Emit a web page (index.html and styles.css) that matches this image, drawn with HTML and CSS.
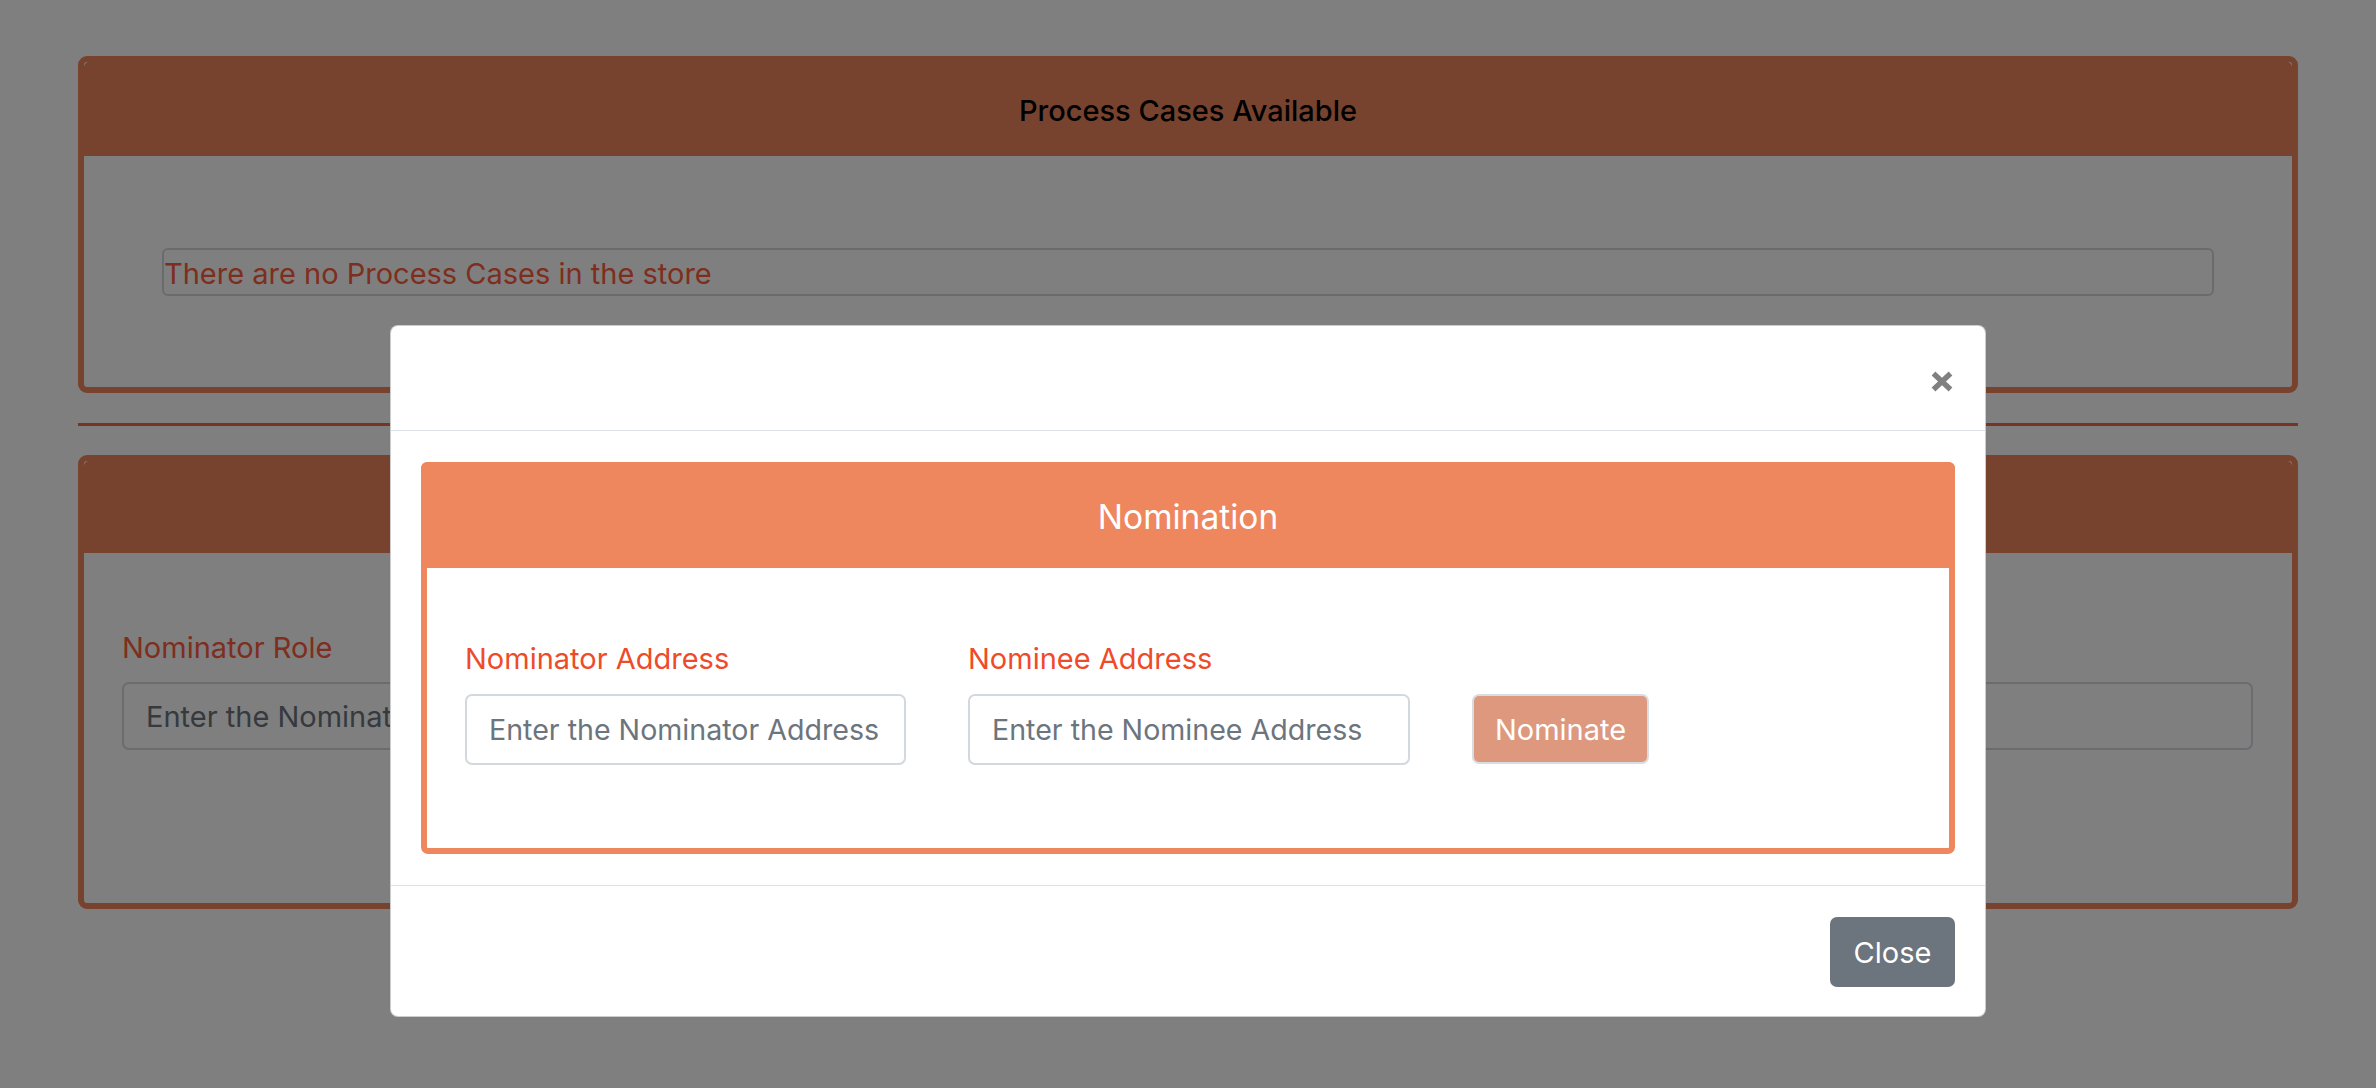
FILE: index.html
```html
<!DOCTYPE html>
<html lang="en">
<head>
<meta charset="utf-8">
<title>Process Cases</title>
<link rel="stylesheet" href="styles.css">
</head>
<body>
<main class="page">
  <section class="card bg-card cases-card">
    <header class="bg-card-header cases-header">
      <h5 class="cases-title">Process Cases Available</h5>
    </header>
    <div class="cases-body">
      <div class="empty-box">There are no Process Cases in the store</div>
    </div>
  </section>

  <hr class="divider">

  <section class="card bg-card role-card">
    <header class="bg-card-header role-header">
      <h5 class="cases-title">Nominator Role</h5>
    </header>
    <div class="role-body">
      <label class="bg-label">Nominator Role</label>
      <input class="bg-input" type="text" placeholder="Enter the Nominator Role">
    </div>
  </section>
</main>

<div class="backdrop"></div>

<div class="modal">
  <div class="modal-header">
    <button class="close" type="button" aria-label="Close">
      <svg width="24" height="23" viewBox="0 0 24 23"><path d="M3.5 3.5 L20.5 19.5 M20.5 3.5 L3.5 19.5" stroke="#808080" stroke-width="5.4" fill="none"/></svg>
    </button>
  </div>
  <div class="modal-body">
    <div class="nom-card">
      <div class="nom-header">Nomination</div>
      <div class="nom-body">
        <div class="field field-one">
          <label class="nom-label">Nominator Address</label>
          <input class="nom-input" type="text" placeholder="Enter the Nominator Address">
        </div>
        <div class="field field-two">
          <label class="nom-label">Nominee Address</label>
          <input class="nom-input" type="text" placeholder="Enter the Nominee Address">
        </div>
        <button class="btn-nominate" type="button">Nominate</button>
      </div>
    </div>
  </div>
  <div class="modal-footer">
    <button class="btn-close" type="button">Close</button>
  </div>
</div>
</body>
</html>
```

FILE: styles.css
```css
* { box-sizing: border-box; }

html, body {
  margin: 0;
  padding: 0;
  background: #ffffff;
  font-family: Inter, "Liberation Sans", Arial, sans-serif;
  color: #212529;
}

body {
  width: 2376px;
  height: 1088px;
  overflow: hidden;
  position: relative;
}

.page {
  padding: 56px 78px 0 78px;
}

/* background cards */
.bg-card {
  border: 6px solid #ee865e;
  border-radius: 9px;
}

.bg-card-header {
  background: #ee865e;
  border-radius: 5px 5px 0 0;
  display: flex;
  align-items: center;
  justify-content: center;
}

.cases-header {
  height: 94px;
  padding-top: 3px;
}

.cases-title {
  margin: 0;
  font-size: 29px;
  font-weight: 500;
  color: #000;
}

.role-header { height: 92px; }
.role-header .cases-title { visibility: hidden; }

.cases-body {
  padding: 92px 78px 91px 78px;
}

.empty-box {
  height: 48px;
  border: 2px solid #d4d6d9;
  border-radius: 6px;
  color: #fd5c3c;
  font-size: 29px;
  line-height: 44px;
  padding: 2px 0 0 0;
}

.divider {
  margin: 30px 0 29px 0;
  border: 0;
  height: 3px;
  background: #f06846;
}

.role-body {
  padding: 73px 39px 153px 38px;
  display: flex;
  flex-direction: column;
}

.bg-label {
  font-size: 29px;
  line-height: 43px;
  color: #fd5c3c;
  margin-bottom: 13px;
}

.bg-input {
  height: 68px;
  border: 2px solid #d4d8de;
  border-radius: 7px;
  padding: 0 22px;
  font-family: inherit;
  font-size: 29px;
  background: transparent;
}
.bg-input::placeholder { color: #6c757d; }

/* overlay */
.backdrop {
  position: absolute;
  inset: 0;
  background: rgba(0, 0, 0, 0.5);
}

.modal {
  position: absolute;
  left: 390px;
  top: 325px;
  width: 1596px;
  background: #fff;
  border: 1px solid rgba(0, 0, 0, 0.2);
  border-radius: 8px;
  display: flex;
  flex-direction: column;
}

.modal-header {
  height: 105px;
  border-bottom: 1px solid #dee2e6;
  display: flex;
  justify-content: flex-end;
  align-items: flex-start;
  padding: 44px 31px 0 0;
}

.close {
  border: 0;
  background: none;
  padding: 0;
  margin: 0;
  width: 24px;
  height: 23px;
  display: block;
}
.close svg { display: block; }

.modal-body {
  padding: 31px 30px 31px 30px;
}

.nom-card {
  border: 6px solid #ee865e;
  border-radius: 7px;
}

.nom-header {
  margin: -6px -6px 0 -6px;
  height: 106px;
  background: #ee865e;
  border-radius: 6px 6px 0 0;
  color: #fff;
  font-size: 33.5px;
  display: flex;
  align-items: center;
  justify-content: center;
  padding-top: 4px;
}

.nom-body {
  padding: 70px 38px 83px 38px;
  display: flex;
  align-items: flex-end;
  gap: 62px;
}

.field {
  display: flex;
  flex-direction: column;
}
.field-one { width: 441px; }
.field-two { width: 442px; }

.nom-label {
  font-size: 29px;
  line-height: 42px;
  color: #ee4b2b;
  margin-bottom: 14px;
}

.nom-input {
  height: 71px;
  border: 2px solid #d3d8de;
  border-radius: 7px;
  padding: 0 4px 0 22px;
  font-family: inherit;
  font-size: 28.6px;
  color: #495057;
  background: #fff;
}
.nom-input::placeholder { color: #6c757d; }

.btn-nominate {
  width: 177px;
  height: 70px;
  margin-bottom: 1px;
  background: #dd987e;
  border: 2px solid #d8dde3;
  border-radius: 7px;
  color: #fff;
  font-family: inherit;
  font-size: 29px;
  padding: 0;
}

.modal-footer {
  border-top: 1px solid #dee2e6;
  height: 131px;
  display: flex;
  justify-content: flex-end;
  align-items: flex-start;
  padding: 31px 30px 0 0;
}

.btn-close {
  width: 125px;
  height: 70px;
  background: #6c757d;
  border: 0;
  border-radius: 7px;
  color: #fff;
  font-family: inherit;
  font-size: 29px;
  padding: 0;
}
```
